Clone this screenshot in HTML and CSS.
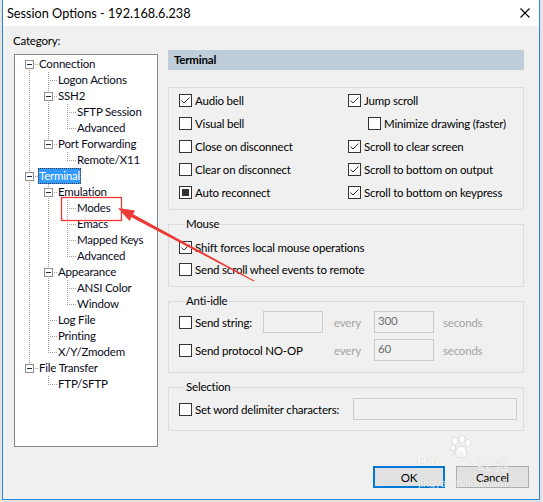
FILE: index.html
```html
<!DOCTYPE html>
<html>
<head>
<meta charset="utf-8">
<title>Session Options</title>
<link rel="stylesheet" href="styles.css">
</head>
<body>
<div class="win">
  <div class="titlebar">
    <span class="title">Session Options - 192.168.6.238</span>
    <svg class="close" width="10" height="10" viewBox="0 0 10 10"><path d="M0.5 0.5 L9.5 9.5 M9.5 0.5 L0.5 9.5" stroke="#000" stroke-width="1.1" fill="none"/></svg>
  </div>
  <div class="client">
    <div class="main">
      <div class="cat">
        <div class="catlabel">Category:</div>
        <div class="tree">
          <div class="row"><span class="n b"><i class="bx"></i></span><span class="lb">Connection</span></div>
          <div class="row"><span class="g v"></span><span class="n f"></span><span class="lb">Logon Actions</span></div>
          <div class="row"><span class="g v"></span><span class="n f"><i class="bx"></i></span><span class="lb">SSH2</span></div>
          <div class="row"><span class="g v"></span><span class="g v"></span><span class="n f"></span><span class="lb">SFTP Session</span></div>
          <div class="row"><span class="g v"></span><span class="g v"></span><span class="n t"></span><span class="lb">Advanced</span></div>
          <div class="row"><span class="g v"></span><span class="n t"><i class="bx"></i></span><span class="lb">Port Forwarding</span></div>
          <div class="row"><span class="g v"></span><span class="g"></span><span class="n t"></span><span class="lb">Remote/X11</span></div>
          <div class="row"><span class="n f"><i class="bx"></i></span><span class="lb sel">Terminal</span></div>
          <div class="row"><span class="g v"></span><span class="n f"><i class="bx"></i></span><span class="lb">Emulation</span></div>
          <div class="row"><span class="g v"></span><span class="g v"></span><span class="n f"></span><span class="lb">Modes</span></div>
          <div class="row"><span class="g v"></span><span class="g v"></span><span class="n f"></span><span class="lb">Emacs</span></div>
          <div class="row"><span class="g v"></span><span class="g v"></span><span class="n f"></span><span class="lb">Mapped Keys</span></div>
          <div class="row"><span class="g v"></span><span class="g v"></span><span class="n t"></span><span class="lb">Advanced</span></div>
          <div class="row"><span class="g v"></span><span class="n f"><i class="bx"></i></span><span class="lb">Appearance</span></div>
          <div class="row"><span class="g v"></span><span class="g v"></span><span class="n f"></span><span class="lb">ANSI Color</span></div>
          <div class="row"><span class="g v"></span><span class="g v"></span><span class="n t"></span><span class="lb">Window</span></div>
          <div class="row"><span class="g v"></span><span class="n f"></span><span class="lb">Log File</span></div>
          <div class="row"><span class="g v"></span><span class="n f"></span><span class="lb">Printing</span></div>
          <div class="row"><span class="g v"></span><span class="n t"></span><span class="lb">X/Y/Zmodem</span></div>
          <div class="row"><span class="n t"><i class="bx"></i></span><span class="lb">File Transfer</span></div>
          <div class="row"><span class="g"></span><span class="n t"></span><span class="lb">FTP/SFTP</span></div>
        </div>
      </div>
      <div class="panel">
        <div class="hdr">Terminal</div>
        <div class="grp g1">
          <div class="cols">
            <span class="cb"><span class="box"><svg viewBox="0 0 11 11"><path d="M1.5 5.5 L4 8 L9.5 2.5" stroke="#333" stroke-width="1" fill="none"/></svg></span>Audio bell</span>
            <span class="cb"><span class="box"><svg viewBox="0 0 11 11"><path d="M1.5 5.5 L4 8 L9.5 2.5" stroke="#333" stroke-width="1" fill="none"/></svg></span>Jump scroll</span>
            <span class="cb"><span class="box"></span>Visual bell</span>
            <span class="cb sub"><span class="box"></span>Minimize drawing (faster)</span>
            <span class="cb"><span class="box"></span>Close on disconnect</span>
            <span class="cb"><span class="box"><svg viewBox="0 0 11 11"><path d="M1.5 5.5 L4 8 L9.5 2.5" stroke="#333" stroke-width="1" fill="none"/></svg></span>Scroll to clear screen</span>
            <span class="cb"><span class="box"></span>Clear on disconnect</span>
            <span class="cb"><span class="box"><svg viewBox="0 0 11 11"><path d="M1.5 5.5 L4 8 L9.5 2.5" stroke="#333" stroke-width="1" fill="none"/></svg></span>Scroll to bottom on output</span>
            <span class="cb"><span class="box mixed"><i class="fill"></i></span>Auto reconnect</span>
            <span class="cb"><span class="box"><svg viewBox="0 0 11 11"><path d="M1.5 5.5 L4 8 L9.5 2.5" stroke="#333" stroke-width="1" fill="none"/></svg></span>Scroll to bottom on keypress</span>
          </div>
        </div>
        <div class="grp mouse">
          <span class="lg">Mouse</span>
          <div class="list">
            <span class="cb cb22"><span class="box"><svg viewBox="0 0 11 11"><path d="M1.5 5.5 L4 8 L9.5 2.5" stroke="#333" stroke-width="1" fill="none"/></svg></span>Shift forces local mouse operations</span>
            <span class="cb cb22"><span class="box"></span>Send scroll wheel events to remote</span>
          </div>
        </div>
        <div class="grp anti">
          <span class="lg">Anti-idle</span>
          <div class="ai">
            <span class="cb cb22"><span class="box"></span>Send string:</span>
            <span class="inp w60"></span>
            <span class="dis">every</span>
            <span class="inp w60">300</span>
            <span class="dis sec">seconds</span>
            <span class="cb cb22 span2"><span class="box"></span>Send protocol NO-OP</span>
            <span class="dis">every</span>
            <span class="inp w60">60</span>
            <span class="dis sec">seconds</span>
          </div>
        </div>
        <div class="grp selg">
          <span class="lg">Selection</span>
          <div class="selrow">
            <span class="cb cb22"><span class="box"></span>Set word delimiter characters:</span>
            <span class="inp wsel"></span>
          </div>
        </div>
      </div>
    </div>
    <div class="btns">
      <span class="btn ok">OK</span>
      <span class="btn cancel">Cancel</span>
    </div>
  </div>
</div>
<div class="wm">
  <span class="wm1">Bai</span><svg class="paw" width="22" height="24" viewBox="0 0 22 24"><g fill="#fff" stroke="#d6d6d6" stroke-width="0.8"><ellipse cx="5" cy="6" rx="3" ry="4"/><ellipse cx="12" cy="4" rx="3" ry="4"/><ellipse cx="18" cy="8" rx="3" ry="3.5"/><ellipse cx="3" cy="13" rx="2.5" ry="3"/><path d="M11 11 C6 11 4 19 6 21 C8 23 14 23 16 21 C18 19 16 11 11 11 Z"/></g></svg><span class="wm2">du</span><span class="wm3">经验</span>
  <span class="wm4">jingyan.baidu.com</span>
</div>
<svg class="anno" width="543" height="502" viewBox="0 0 543 502">
  <rect x="61.5" y="197.5" width="60" height="23" fill="none" stroke="#ee3a36" stroke-width="1.3"/>
  <polygon points="118,208 135,210.5 129.5,221" fill="#ee3a36"/>
  <polygon points="132.8,214 131.4,217.2 253.8,281.4 254.3,280.6" fill="#ee3a36"/>
</svg>
</body>
</html>
```

FILE: styles.css
```css
* { box-sizing: border-box; }
html, body { margin: 0; padding: 0; }
body {
  width: 543px;
  height: 502px;
  background: #e4e4e4;
  font-family: Lato, "Noto Sans", sans-serif;
  font-size: 11.5px;
  letter-spacing: -0.2px;
  color: #000;
  position: relative;
  overflow: hidden;
}
.win {
  margin-left: 2px;
  width: 538px;
  height: 500px;
  border: 1px solid #2b88d8;
  border-top: none;
  background: #f0f0f0;
}
.titlebar {
  height: 26px;
  background: #fff;
  display: flex;
  align-items: center;
  justify-content: space-between;
  padding: 0 9px 0 4px;
}
.title { font-size: 12.7px; letter-spacing: 0; color: #000; }
.close { display: block; }
.client {
  height: 473px;
  padding: 7px 0 0 10px;
}
.main { display: flex; }
.cat { width: 145px; }
.catlabel { line-height: 16px; }
.tree {
  margin: 5px 0 0 1px;
  width: 144px;
  height: 393px;
  border: 1px solid #828790;
  background: #fff;
  padding: 1px 0 0 4px;
  overflow: hidden;
}
.row { display: flex; height: 16px; }
.g, .n { width: 19px; height: 16px; flex: none; display: block; }
.g.v {
  background: repeating-linear-gradient(to bottom, #a0a0a0 0 1px, transparent 1px 2px) 10px 0 / 1px 16px no-repeat;
}
.n {
  background: repeating-linear-gradient(to right, #a0a0a0 0 1px, transparent 1px 2px) 11px 8px / 8px 1px no-repeat;
}
.n.f {
  background:
    repeating-linear-gradient(to right, #a0a0a0 0 1px, transparent 1px 2px) 12px 8px / 7px 1px no-repeat,
    repeating-linear-gradient(to bottom, #a0a0a0 0 1px, transparent 1px 2px) 10px 0 / 1px 16px no-repeat;
}
.n.t {
  background:
    repeating-linear-gradient(to right, #a0a0a0 0 1px, transparent 1px 2px) 12px 8px / 7px 1px no-repeat,
    repeating-linear-gradient(to bottom, #a0a0a0 0 1px, transparent 1px 2px) 10px 0 / 1px 9px no-repeat;
}
.n.b {
  background:
    repeating-linear-gradient(to right, #a0a0a0 0 1px, transparent 1px 2px) 12px 8px / 7px 1px no-repeat,
    repeating-linear-gradient(to bottom, #a0a0a0 0 1px, transparent 1px 2px) 10px 8px / 1px 8px no-repeat;
}
.bx {
  display: block;
  width: 9px;
  height: 9px;
  margin: 4px 0 0 6px;
  border: 1px solid #8f8f8f;
  background: linear-gradient(#1e2a44, #1e2a44) 1px 3px / 5px 1px no-repeat, #fff;
}
.lb {
  padding: 0 1px;
  line-height: 16px;
  height: 16px;
  white-space: nowrap;
  color: #0a0a1a;
}
.lb.sel {
  background: #3399ff;
  color: #fff;
  outline: 1px dotted #3a3a3a;
  outline-offset: -1px;
}
.panel {
  width: 356px;
  margin: 17px 0 0 10px;
}
.hdr {
  height: 20px;
  line-height: 20px;
  background: #bfcddb;
  font-weight: bold;
  padding-left: 6px;
}
.grp {
  border: 1px solid #dcdcdc;
}
.g1 {
  margin-top: 17px;
  padding: 1px 0 5px 10px;
}
.cols {
  display: grid;
  grid-template-columns: 169px 1fr;
}
.cb {
  display: flex;
  align-items: center;
  height: 23px;
  white-space: nowrap;
}
.cb22 { height: 22px; }
.cb.sub { padding-left: 20px; }
.box {
  width: 13px;
  height: 13px;
  border: 1px solid #333;
  background: #fff;
  margin-right: 3px;
  flex: none;
  display: flex;
  align-items: center;
  justify-content: center;
}
.box svg { width: 11px; height: 11px; display: block; }
.box .fill { display: block; width: 7px; height: 7px; background: #333; }
.lg {
  display: block;
  width: max-content;
  margin: -8px 0 0 6px;
  padding: 0 1px;
  line-height: 14px;
  background: #f0f0f0;
}
.mouse {
  margin-top: 14px;
  padding: 0 0 6px 10px;
}
.list { margin-top: 5px; }
.anti {
  margin-top: 14px;
  padding: 0 0 11px 10px;
}
.ai {
  margin-top: 3px;
  display: grid;
  grid-template-columns: 84px 71px 40px 60px auto;
  grid-auto-rows: 22px;
  row-gap: 6px;
  align-items: center;
}
.span2 { grid-column: span 2; }
.inp {
  display: block;
  height: 22px;
  border: 1px solid #cccccc;
  background: #f0f0f0;
  color: #6d6d6d;
  padding: 1px 3px 0;
  line-height: 16px;
}
.w60 { width: 60px; }
.dis { color: #a3a3a3; }
.sec { padding-left: 9px; }
.selg {
  margin-top: 14px;
  padding: 0 6px 10px 10px;
}
.selrow {
  margin-top: 4px;
  display: flex;
  align-items: center;
}
.wsel { width: 164px; margin-left: auto; }
.btns {
  display: flex;
  justify-content: flex-end;
  gap: 11px;
  padding-right: 10px;
  margin-top: 19px;
}
.btn {
  height: 22px;
  background: #e1e1e1;
  border: 1px solid #adadad;
  display: flex;
  align-items: center;
  justify-content: center;
}
.btn.ok { width: 72px; border: 2px solid #0078d7; }
.btn.cancel { width: 73px; }
.wm {
  position: absolute;
  left: 414px;
  top: 434px;
  width: 120px;
  height: 60px;
  pointer-events: none;
  color: rgba(255, 255, 255, 0.85);
  text-shadow: 0 0 1px rgba(0, 0, 0, 0.18);
  font-family: "Liberation Sans", sans-serif;
  letter-spacing: 0;
}
.wm1 { position: absolute; left: 3px; top: 19px; font-size: 14px; font-weight: bold; }
.paw { position: absolute; left: 36px; top: 1px; }
.wm2 { position: absolute; left: 39px; top: 14px; font-size: 9px; font-weight: bold; }
.wm3 { position: absolute; left: 63px; top: 17px; font-size: 16px; font-family: "Noto Sans CJK SC", sans-serif; }
.wm4 { position: absolute; left: 4px; top: 43px; font-size: 11px; }
.anno {
  position: absolute;
  left: 0;
  top: 0;
  pointer-events: none;
}
```
